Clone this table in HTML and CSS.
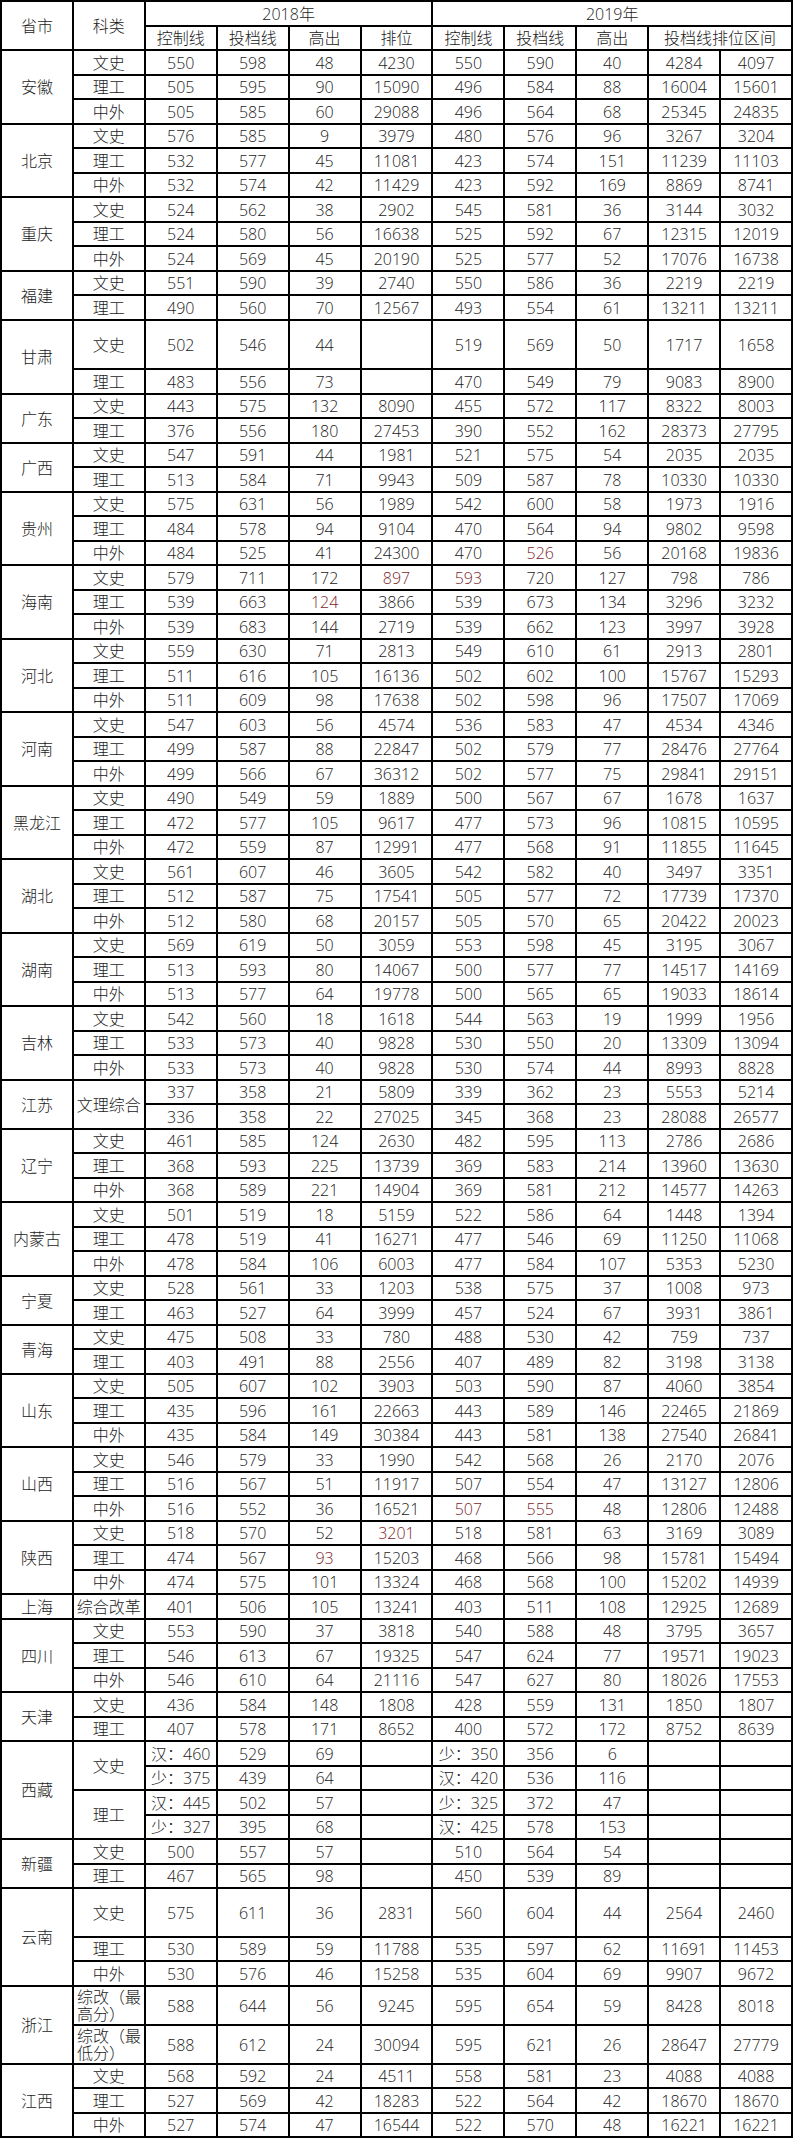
FILE: index.html
```html
<!DOCTYPE html>
<html lang="zh-CN">
<head>
<meta charset="utf-8">
<title>2018-2019年各省录取分数</title>
<link rel="stylesheet" href="styles.css">
</head>
<body>
<table class="score">
<tbody>
<tr class="r"><td rowspan="2">省市</td><td rowspan="2">科类</td><td colspan="4">2018年</td><td colspan="5">2019年</td></tr>
<tr class="r"><td>控制线</td><td>投档线</td><td>高出</td><td>排位</td><td>控制线</td><td>投档线</td><td>高出</td><td colspan="2">投档线排位区间</td></tr>

<tr class="r"><td rowspan="3">安徽</td><td>文史</td><td>550</td><td>598</td><td>48</td><td>4230</td><td>550</td><td>590</td><td>40</td><td>4284</td><td>4097</td></tr>
<tr class="r"><td>理工</td><td>505</td><td>595</td><td>90</td><td>15090</td><td>496</td><td>584</td><td>88</td><td>16004</td><td>15601</td></tr>
<tr class="r"><td>中外</td><td>505</td><td>585</td><td>60</td><td>29088</td><td>496</td><td>564</td><td>68</td><td>25345</td><td>24835</td></tr>

<tr class="r"><td rowspan="3">北京</td><td>文史</td><td>576</td><td>585</td><td>9</td><td>3979</td><td>480</td><td>576</td><td>96</td><td>3267</td><td>3204</td></tr>
<tr class="r"><td>理工</td><td>532</td><td>577</td><td>45</td><td>11081</td><td>423</td><td>574</td><td>151</td><td>11239</td><td>11103</td></tr>
<tr class="r"><td>中外</td><td>532</td><td>574</td><td>42</td><td>11429</td><td>423</td><td>592</td><td>169</td><td>8869</td><td>8741</td></tr>

<tr class="r"><td rowspan="3">重庆</td><td>文史</td><td>524</td><td>562</td><td>38</td><td>2902</td><td>545</td><td>581</td><td>36</td><td>3144</td><td>3032</td></tr>
<tr class="r"><td>理工</td><td>524</td><td>580</td><td>56</td><td>16638</td><td>525</td><td>592</td><td>67</td><td>12315</td><td>12019</td></tr>
<tr class="r"><td>中外</td><td>524</td><td>569</td><td>45</td><td>20190</td><td>525</td><td>577</td><td>52</td><td>17076</td><td>16738</td></tr>

<tr class="r"><td rowspan="2">福建</td><td>文史</td><td>551</td><td>590</td><td>39</td><td>2740</td><td>550</td><td>586</td><td>36</td><td>2219</td><td>2219</td></tr>
<tr class="r"><td>理工</td><td>490</td><td>560</td><td>70</td><td>12567</td><td>493</td><td>554</td><td>61</td><td>13211</td><td>13211</td></tr>

<tr class="tall"><td rowspan="2">甘肃</td><td>文史</td><td>502</td><td>546</td><td>44</td><td></td><td>519</td><td>569</td><td>50</td><td>1717</td><td>1658</td></tr>
<tr class="r"><td>理工</td><td>483</td><td>556</td><td>73</td><td></td><td>470</td><td>549</td><td>79</td><td>9083</td><td>8900</td></tr>

<tr class="r"><td rowspan="2">广东</td><td>文史</td><td>443</td><td>575</td><td>132</td><td>8090</td><td>455</td><td>572</td><td>117</td><td>8322</td><td>8003</td></tr>
<tr class="r"><td>理工</td><td>376</td><td>556</td><td>180</td><td>27453</td><td>390</td><td>552</td><td>162</td><td>28373</td><td>27795</td></tr>

<tr class="r"><td rowspan="2">广西</td><td>文史</td><td>547</td><td>591</td><td>44</td><td>1981</td><td>521</td><td>575</td><td>54</td><td>2035</td><td>2035</td></tr>
<tr class="r"><td>理工</td><td>513</td><td>584</td><td>71</td><td>9943</td><td>509</td><td>587</td><td>78</td><td>10330</td><td>10330</td></tr>

<tr class="r"><td rowspan="3">贵州</td><td>文史</td><td>575</td><td>631</td><td>56</td><td>1989</td><td>542</td><td>600</td><td>58</td><td>1973</td><td>1916</td></tr>
<tr class="r"><td>理工</td><td>484</td><td>578</td><td>94</td><td>9104</td><td>470</td><td>564</td><td>94</td><td>9802</td><td>9598</td></tr>
<tr class="r"><td>中外</td><td>484</td><td>525</td><td>41</td><td>24300</td><td>470</td><td class="red">526</td><td>56</td><td>20168</td><td>19836</td></tr>

<tr class="r"><td rowspan="3">海南</td><td>文史</td><td>579</td><td>711</td><td>172</td><td class="red">897</td><td class="red">593</td><td>720</td><td>127</td><td>798</td><td>786</td></tr>
<tr class="r"><td>理工</td><td>539</td><td>663</td><td class="red">124</td><td>3866</td><td>539</td><td>673</td><td>134</td><td>3296</td><td>3232</td></tr>
<tr class="r"><td>中外</td><td>539</td><td>683</td><td>144</td><td>2719</td><td>539</td><td>662</td><td>123</td><td>3997</td><td>3928</td></tr>

<tr class="r"><td rowspan="3">河北</td><td>文史</td><td>559</td><td>630</td><td>71</td><td>2813</td><td>549</td><td>610</td><td>61</td><td>2913</td><td>2801</td></tr>
<tr class="r"><td>理工</td><td>511</td><td>616</td><td>105</td><td>16136</td><td>502</td><td>602</td><td>100</td><td>15767</td><td>15293</td></tr>
<tr class="r"><td>中外</td><td>511</td><td>609</td><td>98</td><td>17638</td><td>502</td><td>598</td><td>96</td><td>17507</td><td>17069</td></tr>

<tr class="r"><td rowspan="3">河南</td><td>文史</td><td>547</td><td>603</td><td>56</td><td>4574</td><td>536</td><td>583</td><td>47</td><td>4534</td><td>4346</td></tr>
<tr class="r"><td>理工</td><td>499</td><td>587</td><td>88</td><td>22847</td><td>502</td><td>579</td><td>77</td><td>28476</td><td>27764</td></tr>
<tr class="r"><td>中外</td><td>499</td><td>566</td><td>67</td><td>36312</td><td>502</td><td>577</td><td>75</td><td>29841</td><td>29151</td></tr>

<tr class="r"><td rowspan="3">黑龙江</td><td>文史</td><td>490</td><td>549</td><td>59</td><td>1889</td><td>500</td><td>567</td><td>67</td><td>1678</td><td>1637</td></tr>
<tr class="r"><td>理工</td><td>472</td><td>577</td><td>105</td><td>9617</td><td>477</td><td>573</td><td>96</td><td>10815</td><td>10595</td></tr>
<tr class="r"><td>中外</td><td>472</td><td>559</td><td>87</td><td>12991</td><td>477</td><td>568</td><td>91</td><td>11855</td><td>11645</td></tr>

<tr class="r"><td rowspan="3">湖北</td><td>文史</td><td>561</td><td>607</td><td>46</td><td>3605</td><td>542</td><td>582</td><td>40</td><td>3497</td><td>3351</td></tr>
<tr class="r"><td>理工</td><td>512</td><td>587</td><td>75</td><td>17541</td><td>505</td><td>577</td><td>72</td><td>17739</td><td>17370</td></tr>
<tr class="r"><td>中外</td><td>512</td><td>580</td><td>68</td><td>20157</td><td>505</td><td>570</td><td>65</td><td>20422</td><td>20023</td></tr>

<tr class="r"><td rowspan="3">湖南</td><td>文史</td><td>569</td><td>619</td><td>50</td><td>3059</td><td>553</td><td>598</td><td>45</td><td>3195</td><td>3067</td></tr>
<tr class="r"><td>理工</td><td>513</td><td>593</td><td>80</td><td>14067</td><td>500</td><td>577</td><td>77</td><td>14517</td><td>14169</td></tr>
<tr class="r"><td>中外</td><td>513</td><td>577</td><td>64</td><td>19778</td><td>500</td><td>565</td><td>65</td><td>19033</td><td>18614</td></tr>

<tr class="r"><td rowspan="3">吉林</td><td>文史</td><td>542</td><td>560</td><td>18</td><td>1618</td><td>544</td><td>563</td><td>19</td><td>1999</td><td>1956</td></tr>
<tr class="r"><td>理工</td><td>533</td><td>573</td><td>40</td><td>9828</td><td>530</td><td>550</td><td>20</td><td>13309</td><td>13094</td></tr>
<tr class="r"><td>中外</td><td>533</td><td>573</td><td>40</td><td>9828</td><td>530</td><td>574</td><td>44</td><td>8993</td><td>8828</td></tr>

<tr class="r"><td rowspan="2">江苏</td><td rowspan="2">文理综合</td><td>337</td><td>358</td><td>21</td><td>5809</td><td>339</td><td>362</td><td>23</td><td>5553</td><td>5214</td></tr>
<tr class="r"><td>336</td><td>358</td><td>22</td><td>27025</td><td>345</td><td>368</td><td>23</td><td>28088</td><td>26577</td></tr>

<tr class="r"><td rowspan="3">辽宁</td><td>文史</td><td>461</td><td>585</td><td>124</td><td>2630</td><td>482</td><td>595</td><td>113</td><td>2786</td><td>2686</td></tr>
<tr class="r"><td>理工</td><td>368</td><td>593</td><td>225</td><td>13739</td><td>369</td><td>583</td><td>214</td><td>13960</td><td>13630</td></tr>
<tr class="r"><td>中外</td><td>368</td><td>589</td><td>221</td><td>14904</td><td>369</td><td>581</td><td>212</td><td>14577</td><td>14263</td></tr>

<tr class="r"><td rowspan="3">内蒙古</td><td>文史</td><td>501</td><td>519</td><td>18</td><td>5159</td><td>522</td><td>586</td><td>64</td><td>1448</td><td>1394</td></tr>
<tr class="r"><td>理工</td><td>478</td><td>519</td><td>41</td><td>16271</td><td>477</td><td>546</td><td>69</td><td>11250</td><td>11068</td></tr>
<tr class="r"><td>中外</td><td>478</td><td>584</td><td>106</td><td>6003</td><td>477</td><td>584</td><td>107</td><td>5353</td><td>5230</td></tr>

<tr class="r"><td rowspan="2">宁夏</td><td>文史</td><td>528</td><td>561</td><td>33</td><td>1203</td><td>538</td><td>575</td><td>37</td><td>1008</td><td>973</td></tr>
<tr class="r"><td>理工</td><td>463</td><td>527</td><td>64</td><td>3999</td><td>457</td><td>524</td><td>67</td><td>3931</td><td>3861</td></tr>

<tr class="r"><td rowspan="2">青海</td><td>文史</td><td>475</td><td>508</td><td>33</td><td>780</td><td>488</td><td>530</td><td>42</td><td>759</td><td>737</td></tr>
<tr class="r"><td>理工</td><td>403</td><td>491</td><td>88</td><td>2556</td><td>407</td><td>489</td><td>82</td><td>3198</td><td>3138</td></tr>

<tr class="r"><td rowspan="3">山东</td><td>文史</td><td>505</td><td>607</td><td>102</td><td>3903</td><td>503</td><td>590</td><td>87</td><td>4060</td><td>3854</td></tr>
<tr class="r"><td>理工</td><td>435</td><td>596</td><td>161</td><td>22663</td><td>443</td><td>589</td><td>146</td><td>22465</td><td>21869</td></tr>
<tr class="r"><td>中外</td><td>435</td><td>584</td><td>149</td><td>30384</td><td>443</td><td>581</td><td>138</td><td>27540</td><td>26841</td></tr>

<tr class="r"><td rowspan="3">山西</td><td>文史</td><td>546</td><td>579</td><td>33</td><td>1990</td><td>542</td><td>568</td><td>26</td><td>2170</td><td>2076</td></tr>
<tr class="r"><td>理工</td><td>516</td><td>567</td><td>51</td><td>11917</td><td>507</td><td>554</td><td>47</td><td>13127</td><td>12806</td></tr>
<tr class="r"><td>中外</td><td>516</td><td>552</td><td>36</td><td>16521</td><td class="red">507</td><td class="red">555</td><td>48</td><td>12806</td><td>12488</td></tr>

<tr class="r"><td rowspan="3">陕西</td><td>文史</td><td>518</td><td>570</td><td>52</td><td class="red">3201</td><td>518</td><td>581</td><td>63</td><td>3169</td><td>3089</td></tr>
<tr class="r"><td>理工</td><td>474</td><td>567</td><td class="red">93</td><td>15203</td><td>468</td><td>566</td><td>98</td><td>15781</td><td>15494</td></tr>
<tr class="r"><td>中外</td><td>474</td><td>575</td><td>101</td><td>13324</td><td>468</td><td>568</td><td>100</td><td>15202</td><td>14939</td></tr>

<tr class="r"><td>上海</td><td>综合改革</td><td>401</td><td>506</td><td>105</td><td>13241</td><td>403</td><td>511</td><td>108</td><td>12925</td><td>12689</td></tr>

<tr class="r"><td rowspan="3">四川</td><td>文史</td><td>553</td><td>590</td><td>37</td><td>3818</td><td>540</td><td>588</td><td>48</td><td>3795</td><td>3657</td></tr>
<tr class="r"><td>理工</td><td>546</td><td>613</td><td>67</td><td>19325</td><td>547</td><td>624</td><td>77</td><td>19571</td><td>19023</td></tr>
<tr class="r"><td>中外</td><td>546</td><td>610</td><td>64</td><td>21116</td><td>547</td><td>627</td><td>80</td><td>18026</td><td>17553</td></tr>

<tr class="r"><td rowspan="2">天津</td><td>文史</td><td>436</td><td>584</td><td>148</td><td>1808</td><td>428</td><td>559</td><td>131</td><td>1850</td><td>1807</td></tr>
<tr class="r"><td>理工</td><td>407</td><td>578</td><td>171</td><td>8652</td><td>400</td><td>572</td><td>172</td><td>8752</td><td>8639</td></tr>

<tr class="r"><td rowspan="4">西藏</td><td rowspan="2">文史</td><td>汉：460</td><td>529</td><td>69</td><td></td><td>少：350</td><td>356</td><td>6</td><td></td><td></td></tr>
<tr class="r"><td>少：375</td><td>439</td><td>64</td><td></td><td>汉：420</td><td>536</td><td>116</td><td></td><td></td></tr>
<tr class="r"><td rowspan="2">理工</td><td>汉：445</td><td>502</td><td>57</td><td></td><td>少：325</td><td>372</td><td>47</td><td></td><td></td></tr>
<tr class="r"><td>少：327</td><td>395</td><td>68</td><td></td><td>汉：425</td><td>578</td><td>153</td><td></td><td></td></tr>

<tr class="r"><td rowspan="2">新疆</td><td>文史</td><td>500</td><td>557</td><td>57</td><td></td><td>510</td><td>564</td><td>54</td><td></td><td></td></tr>
<tr class="r"><td>理工</td><td>467</td><td>565</td><td>98</td><td></td><td>450</td><td>539</td><td>89</td><td></td><td></td></tr>

<tr class="tall"><td rowspan="3">云南</td><td>文史</td><td>575</td><td>611</td><td>36</td><td>2831</td><td>560</td><td>604</td><td>44</td><td>2564</td><td>2460</td></tr>
<tr class="r"><td>理工</td><td>530</td><td>589</td><td>59</td><td>11788</td><td>535</td><td>597</td><td>62</td><td>11691</td><td>11453</td></tr>
<tr class="r"><td>中外</td><td>530</td><td>576</td><td>46</td><td>15258</td><td>535</td><td>604</td><td>69</td><td>9907</td><td>9672</td></tr>

<tr class="mid"><td rowspan="2">浙江</td><td class="wrap">综改（最高分）</td><td>588</td><td>644</td><td>56</td><td>9245</td><td>595</td><td>654</td><td>59</td><td>8428</td><td>8018</td></tr>
<tr class="mid"><td class="wrap">综改（最低分）</td><td>588</td><td>612</td><td>24</td><td>30094</td><td>595</td><td>621</td><td>26</td><td>28647</td><td>27779</td></tr>

<tr class="r"><td rowspan="3">江西</td><td>文史</td><td>568</td><td>592</td><td>24</td><td>4511</td><td>558</td><td>581</td><td>23</td><td>4088</td><td>4088</td></tr>
<tr class="r"><td>理工</td><td>527</td><td>569</td><td>42</td><td>18283</td><td>522</td><td>564</td><td>42</td><td>18670</td><td>18670</td></tr>
<tr class="r"><td>中外</td><td>527</td><td>574</td><td>47</td><td>16544</td><td>522</td><td>570</td><td>48</td><td>16221</td><td>16221</td></tr>
</tbody>
</table>
</body>
</html>
```

FILE: styles.css
```css
html, body {
  margin: 0;
  padding: 0;
  background: #fff;
}

.score {
  width: 793px;
  table-layout: fixed;
  border-collapse: collapse;
  font-family: "Open Sans", "Noto Sans CJK SC", sans-serif;
  font-weight: 300;
  font-size: 16px;
  line-height: 18px;
  color: #1a1a1a;
}

.score td {
  border: 2px solid #000;
  padding: 0 1px;
  text-align: center;
  vertical-align: middle;
  white-space: nowrap;
  overflow: hidden;
}

.score tr.r:nth-child(odd) { height: 25px; }
.score tr.r:nth-child(even) { height: 24px; }
.score tr.tall { height: 49px; }
.score tr.mid { height: 39px; }

.score td.red { color: #7d1f2c; }

.score td.wrap {
  white-space: normal;
  text-align: left;
  line-height: 17px;
  padding: 0 0 0 3px;
}
```
